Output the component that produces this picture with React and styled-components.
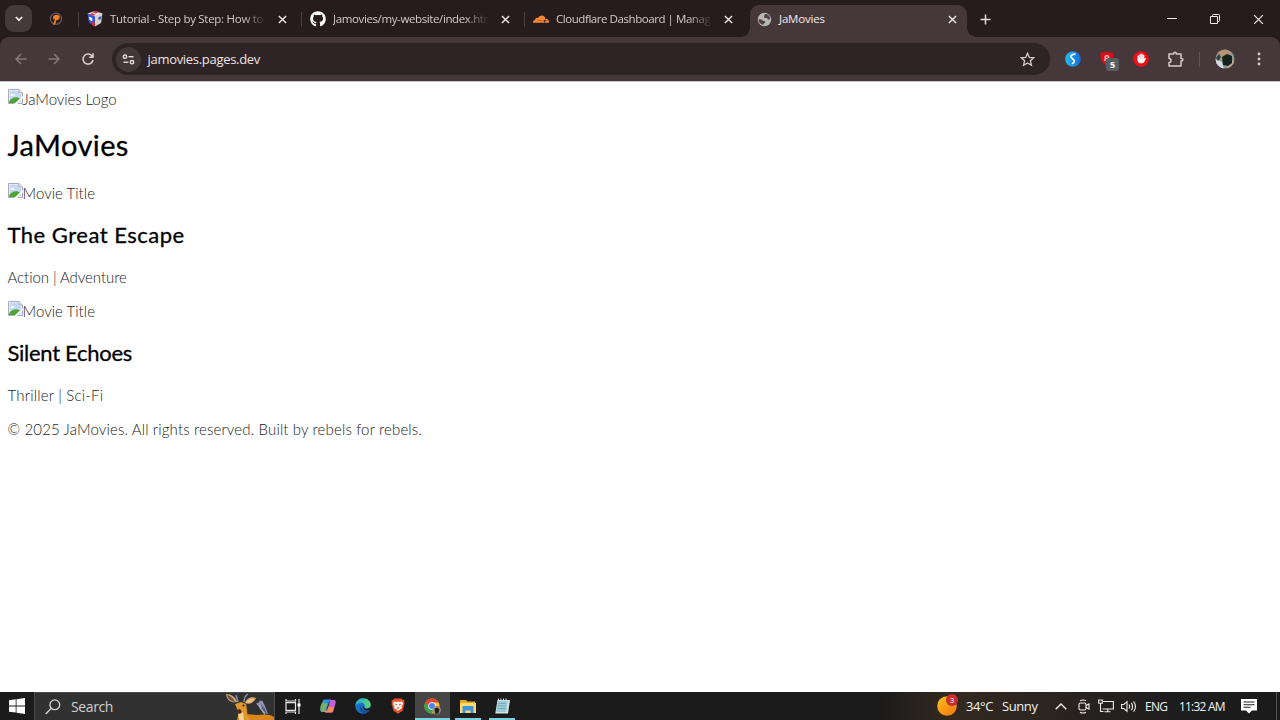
import React from 'react'
import styled, { createGlobalStyle, css } from 'styled-components';
import { FaGithub, FaCloudflare } from 'react-icons/fa';

const tabs = [
  { title: 'Tutorial - Step by Step: How to', icon: 'cube', spacing: -0.28 },
  { title: 'Jamovies/my-website/index.html', icon: 'github', spacing: -0.38 },
  { title: 'Cloudflare Dashboard | Manage', icon: 'cloudflare', spacing: -0.44 },
]

const movies = [
  { title: 'The Great Escape', genre: 'Action | Adventure', titleSpacing: 0.5, genreSpacing: -0.06 },
  { title: 'Silent Echoes', genre: 'Thriller | Sci-Fi', titleSpacing: -0.28, genreSpacing: 0.2 },
]

function Cross({ size = 9, width = 1.6 }) {
  return (
    <svg width={size} height={size} viewBox="0 0 10 10" fill="none" stroke="currentColor" strokeWidth={width}>
      <path d="M1 1l8 8M9 1l-8 8" />
    </svg>
  )
}

function CubeIcon() {
  return (
    <svg width="16" height="16" viewBox="0 0 16 16">
      <path d="M.5 2.5L8 5v10.5L2 12z" fill="#2b57d9" />
      <path d="M15.5 2.5L8 5v10.5L14 12z" fill="#d9d3c4" />
      <path d="M.5 2.500L8 0l7.500 2.500L8 5.500z" fill="#e4e6f2" />
      <path d="M5 1l4 1.500 3-1.500L8 0zM2 3l4-.8L8.500 4 6 4.800z" fill="#dd2f36" />
      <path d="M1.800 5.500l3.500 1.500v3.500L2.400 8.800z" fill="#f1f3fa" />
      <path d="M5 10.500l3 1.500v3.500l-3-1.700z" fill="#e12c33" />
      <path d="M14.500 5l-3 1.300v3l2.600-1.500z" fill="#2c4fc4" />
    </svg>
  )
}

function PinnedIcon() {
  return (
    <svg width="14" height="14" viewBox="0 0 14 14" fill="none">
      <circle cx="7" cy="6.800" r="5.600" stroke="#6b5d60" strokeWidth="1.200" />
      <path d="M4 4.800C5 2.600 9.800 2 10.600 4.500c.7 2.200-1.300 3.800-3 3.500L6.200 12.300 4 13l2-6.200-1.500 1z" fill="#f08022" />
    </svg>
  )
}

function GlobeIcon() {
  return (
    <svg width="15" height="15" viewBox="0 0 15 15">
      <circle cx="7.500" cy="7.500" r="6.700" fill="#b9b6b7" />
      <path d="M8 2.200c1.700-.7 4.500 1 5 3.300.3 1.500-.5 2.500-1.600 2.200-.8-.2-.6-1.500-1.700-1.700-1-.2-2.300.3-2.600-.8-.3-1 .2-2.400.9-3zM1.700 7.200c1.400-.2 3 .2 4 1.200.8.8 2.700.2 2.500 1.600-.2 1.300-1.500 1.200-1.800 2.800-2.600-.3-5-2.600-4.700-5.600z" fill="#504447" />
    </svg>
  )
}

function TabIcon({ name }) {
  if (name === 'cube') return <CubeIcon />
  if (name === 'github') return <FaGithub size={16} color="#fff" />
  return <FaCloudflare size={17} color="#f58634" />
}

function BrokenImage() {
  return (
    <svg width="15" height="15" viewBox="0 0 15 15">
      <path d="M.5.500h10.500l3.500 3.500v10.500H.500z" fill="#fff" stroke="#a9adb3" />
      <path d="M1.500 1.500H11V5h2.500v8.500h-12z" fill="#c5d9f6" />
      <path d="M3 5.800c.3-1.500 2.500-1.500 2.800-.3 1 0 1.200 1 .8 1.300H3c-.9 0-.9-.9 0-1z" fill="#fff" />
      <path d="M1 14v-1.500C3 9.500 6 7.500 10 8.500l2 1L8 14z" fill="#4fa534" />
      <path d="M15 7v2L9 15H6z" fill="#fff" />
      <path d="M11 .5V4h3.500" fill="#e7e9ec" stroke="#a9adb3" />
    </svg>
  )
}

function TitleBar() {
  return (
    <TabStrip>
      <TabSearch>
        <svg width="8" height="6" viewBox="0 0 8 6" fill="none" stroke="#f3eaec" strokeWidth="1.700"><path d="M.8 1L4 4.200 7.200 1" /></svg>
      </TabSearch>
      <PinnedTab><PinnedIcon /></PinnedTab>
      {tabs.map((tab) => (
        <Tab key={tab.icon}>
          <TabIcon name={tab.icon} />
          <TabTitle $spacing={tab.spacing}>{tab.title}</TabTitle>
          <CloseButton><Cross /></CloseButton>
        </Tab>
      ))}
      <ActiveTab>
        <GlobeIcon />
        <ActiveTitle>JaMovies</ActiveTitle>
        <CloseButton><Cross /></CloseButton>
      </ActiveTab>
      <NewTab>
        <svg width="11" height="11" viewBox="0 0 11 11" stroke="#e6dcde" strokeWidth="1.500"><path d="M5.500.500v10M.500 5.500h10" /></svg>
      </NewTab>
      <WindowButtons>
        <svg width="10" height="10" viewBox="0 0 10 10" stroke="#f1e9ea"><path d="M0 4.500h10" /></svg>
        <svg width="10" height="10" viewBox="0 0 10 10" fill="none" stroke="#f1e9ea"><path d="M.5 2.500h7v7h-7zM2.500 2.500v-1q0-1 1-1h5q1 0 1 1v5q0 1-1 1h-1" /></svg>
        <Cross size={11} width={1.1} />
      </WindowButtons>
    </TabStrip>
  )
}

function Toolbar() {
  return (
    <ToolbarRow>
      <NavButton $dim>
        <svg width="12" height="12" viewBox="0 0 12 12"><path d="M11.500 6H1M6 1L1 6l5 5" /></svg>
      </NavButton>
      <NavButton $dim>
        <svg width="12" height="12" viewBox="0 0 12 12"><path d="M.500 6H11M6 1l5 5-5 5" /></svg>
      </NavButton>
      <NavButton>
        <svg width="12" height="12" viewBox="0 0 12 12"><path d="M10.300 3.400A5 5 0 1 0 11 7M11 .300v3.900H7.200" /></svg>
      </NavButton>
      <AddressBar>
        <SiteInfo>
          <svg width="13" height="11" viewBox="0 0 13 11" fill="none" stroke="#e8dddf" strokeWidth="1.400">
            <circle cx="3" cy="2.700" r="1.700" /><path d="M6.500 2.700h5" />
            <circle cx="10" cy="8.200" r="1.700" /><path d="M1.500 8.200h5" />
          </svg>
        </SiteInfo>
        <Url>jamovies.pages.dev</Url>
        <svg width="15" height="15" viewBox="0 0 15 15" fill="none" stroke="#dccfd2" strokeWidth="1.300">
          <path d="M7.500 1.300l1.800 4.100 4.500.4-3.400 3 1 4.400-3.900-2.300-3.900 2.300 1-4.400-3.400-3 4.500-.4z" />
        </svg>
      </AddressBar>
      <Extension>
        <svg width="16" height="16" viewBox="0 0 16 16">
          <defs><linearGradient id="swirl" x2="1"><stop stopColor="#20bdf2" /><stop offset="1" stopColor="#1268d8" /></linearGradient></defs>
          <circle cx="8" cy="8" r="7.800" fill="url(#swirl)" />
          <path d="M10.500 2.800C6.500 3.300 4.500 5 7 7.200s4 3.200 0 5.700" fill="none" stroke="#fff" strokeWidth="1.700" />
        </svg>
      </Extension>
      <Extension>
        <svg width="16" height="16" viewBox="0 0 16 16">
          <path d="M1.500 2C4 1 6 1 8 .800c2 .2 4 .4 6.300 1.200.5 5.500-.3 10-6.300 13.200C3 12 .8 8 1.500 2z" fill="#d8101b" />
          <path d="M6 10l.3-4.500c.8-1.500 3.500-1 3.400.7-.2 1.200-1.300 1.500-2.700 1.400" fill="none" stroke="#f4c6c9" strokeWidth="1.400" />
        </svg>
        <Counter>5</Counter>
      </Extension>
      <Extension>
        <svg width="16" height="16" viewBox="0 0 16 16">
          <circle cx="8" cy="8" r="7.800" fill="#f20d16" />
          <path d="M5.300 9V5M7.100 8V3.500M8.900 8V3.300M10.600 8V4.500" stroke="#fff" strokeWidth="1.500" strokeLinecap="round" />
          <path d="M4.600 7.500h6.700l1-.7.7.5-1.900 4c-.7 1.300-4.400 1.700-5.500.3-1-1.200-1.200-2.500-1-4.100z" fill="#fff" />
        </svg>
      </Extension>
      <Extension>
        <svg width="17" height="17" viewBox="0 0 17 17" fill="none" stroke="#d6c8cb" strokeWidth="1.500" strokeLinejoin="round">
          <path d="M2 3h4.700V2.500a1.300 1.300 0 0 1 2.600 0V3H14v4.500h.6a1.300 1.300 0 0 1 0 2.600H14V15H2v-3.600a2 2 0 0 0 0-4z" />
        </svg>
      </Extension>
      <Divider />
      <Avatar>
        <svg width="20" height="20" viewBox="0 0 20 20">
          <defs><clipPath id="face"><circle cx="10" cy="10" r="9.500" /></clipPath></defs>
          <g clipPath="url(#face)">
            <path d="M0 0h20v20H0z" fill="#8e9a94" />
            <path d="M3 2l8-2 5 4-4 4-7 2z" fill="#b79272" />
            <path d="M0 10l7 3 2 7H0z" fill="#d4dbe0" />
            <path d="M14 12h6v8h-8z" fill="#c2a68c" />
            <path d="M7 8l5-3 5 2v7l-4 3-5-1z" fill="#14231f" />
            <path d="M4 5l2 3-3 4-2-3z" fill="#30413c" />
          </g>
        </svg>
      </Avatar>
      <MenuButton>
        <svg width="4" height="14" viewBox="0 0 4 14" fill="#d6c8cb"><circle cx="2" cy="2" r="1.400" /><circle cx="2" cy="7" r="1.400" /><circle cx="2" cy="12" r="1.400" /></svg>
      </MenuButton>
    </ToolbarRow>
  )
}

function Page() {
  return (
    <PageBody>
      <ImageRow $spacing={-0.07}><BrokenImage />JaMovies Logo</ImageRow>
      <SiteTitle>JaMovies</SiteTitle>
      {movies.map((movie) => (
        <Movie key={movie.title}>
          <ImageRow $spacing={0.03}><BrokenImage />Movie Title</ImageRow>
          <MovieTitle $spacing={movie.titleSpacing}>{movie.title}</MovieTitle>
          <Text $spacing={movie.genreSpacing}>{movie.genre}</Text>
        </Movie>
      ))}
      <Text $spacing={0.145}>© 2025 JaMovies. All rights reserved. Built by rebels for rebels.</Text>
    </PageBody>
  )
}

function Taskbar() {
  return (
    <TaskbarRow>
      <StartButton>
        <svg width="16" height="16" viewBox="0 0 16 16" fill="#fff"><path d="M0 2.300l6.700-1v6.200H0zM7.500 1.200L16 0v7.500H7.500zM0 8.400h6.700v6.200L0 13.700zM7.500 8.400H16V16l-8.500-1.200z" /></svg>
      </StartButton>
      <SearchBox>
        <svg width="16" height="16" viewBox="0 0 16 16" fill="none" stroke="#d8d8d8" strokeWidth="1.300"><circle cx="9.800" cy="5.800" r="4.900" /><path d="M6.300 9.300L.7 15" /></svg>
        <SearchText>Search</SearchText>
        <svg width="49" height="27" viewBox="0 0 49 27">
          <path d="M14 18c3-1 7-1 8 3l10 1c6-1 14-1 17 2v3H12z" fill="#d9861c" />
          <path d="M10 11l6-2 5 2 1 6c0 5 1 8 3 10H14c1-3 0-7-1-9z" fill="#e0982e" />
          <path d="M13 19c2 1 4 1 5 0l1 8h-5z" fill="#f5d491" />
          <path d="M1 1c5 0 10 3 11 8-4 1-10 0-11-8z" fill="#c9a578" />
          <path d="M2 2c4 1 7 4 8 7-4-1-7-3-8-7z" fill="#765039" />
          <path d="M31 5c-5-2-10 1-11 5 4 2 9 0 11-5z" fill="#dfa365" />
          <path d="M29 6c-3-1-6 1-8 4 3 0 6-1 8-4z" fill="#f0c39a" />
          <path d="M13 9L11 2M19 9c0-3 1-6 4-8" fill="none" stroke="#8391ac" strokeWidth="1.500" />
          <path d="M12 17l3-1 2 3-2 2-3-1z" fill="#4a2b18" />
          <circle cx="18.500" cy="12.500" r="1" fill="#2b170c" />
          <path d="M31 10.500l2.500-1 1.500-2 2.500.5 2.500 5 3 8-5-1-3.500-5.500z" fill="#8a91ae" />
          <path d="M36 12l3.500 3 2.500 6-4-3z" fill="#53608c" />
          <path d="M34.500 12l1 4 3 2.500 1 3" fill="none" stroke="#c9b5ab" />
        </svg>
      </SearchBox>
      <TaskCell $first>
        <svg width="16" height="15" viewBox="0 0 16 15" fill="none" stroke="#e6e6e6" strokeWidth="1.200"><path d="M1 3.700h9.500v7.600H1zM1 0v2h9.500V0M1 15v-2h9.500v2M14 0v15" /><path d="M12.500 4.500h3v3h-3z" fill="#fff" stroke="none" /></svg>
      </TaskCell>
      <TaskCell>
        <svg width="16" height="16" viewBox="0 0 16 16">
          <path d="M5 1.500h5.500c1.200 0 1.500 1 1.800 2H9L6.500 12c-.5 1.500-1.200 2-2.500 2H2C.3 14 0 12 .5 10.500l2-7C3 2 3.500 1.500 5 1.500z" fill="#2f8fe6" />
          <path d="M.4 8.500L2 4.500l5.500 1-1.800 6.200C5 13.600 4.200 14 3 14c-2 0-3-1.500-2.600-5.500z" fill="#6fb566" />
          <path d="M11 14.500H6c-1.200 0-1.500-1-1.800-2h3L9.600 4c.4-1.500 1.200-2 2.500-2H14c1.700 0 2 2 1.500 3.500l-2 7c-.5 1.500-1 2-2.500 2z" fill="#c45fd4" />
          <path d="M11 14.500H6c-1.200 0-1.500-1-1.800-2h3l1-3.500H14l-.8 3c-.4 2-.9 2.500-2.200 2.500z" fill="#f48a58" />
        </svg>
      </TaskCell>
      <TaskCell>
        <svg width="16" height="16" viewBox="0 0 16 16">
          <defs><linearGradient id="edge" x2="1" y2=".3"><stop stopColor="#25a4dd" /><stop offset="1" stopColor="#55d576" /></linearGradient></defs>
          <circle cx="8" cy="8" r="7.700" fill="#1671c8" />
          <path d="M.3 8C.5 3.500 4 .300 8 .300c4.500 0 7.700 3 7.700 6.300 0 2.600-2 4-4.200 4-2 0-2.500-.8-2-1.500C10.800 7 8.500 4.800 5.900 5 3 5.100 1 6.500.3 8z" fill="url(#edge)" />
          <path d="M6.300 7.300c-.8 3.200 2.200 5.800 7.800 4.900C11 16.800 4.500 14.500 4.500 10.500c0-1.500.8-2.600 1.800-3.200z" fill="#155099" />
          <path d="M9.400 9.200c-.3 1.700 3.300 2 5.500.4h.9c-.2 1.500-1 2.100-1.700 2.600-4.500.8-7-1.700-6-4.200z" fill="#1b1b1b" />
        </svg>
      </TaskCell>
      <TaskCell>
        <svg width="14" height="16" viewBox="0 0 14 16">
          <path d="M3.500.500h7L12 2l1.500.2-.3 2 .3 1.500-2 7L7 15.800l-4.500-3.100-2-7 .3-1.500-.3-2L2 2z" fill="#f3502a" />
          <path d="M3 3.500l2.500.4L7 3.500l1.500.4 2.500-.4 1 2-1.500 3.200.3 1.300L7 12.800 3.200 10l.3-1.300L2 5.500z" fill="#fff" />
          <path d="M3.500 5.500L6 6.300 5.500 8zM10.500 5.500L8 6.300 8.500 8zM5.500 10L7 9l1.500 1L7 11z" fill="#f3502a" />
        </svg>
      </TaskCell>
      <TaskCell $open $active>
        <svg width="17" height="17" viewBox="0 0 17 17">
          <circle cx="8" cy="8" r="7.600" fill="#f6c52a" />
          <path d="M1.400 4.300A7.600 7.600 0 0 1 14.700 4.400H8L4.700 10z" fill="#e24334" />
          <path d="M1.400 4.200A7.600 7.600 0 0 0 7.700 15.600L11 9.800 5 9.800z" fill="#34a353" />
          <circle cx="8" cy="8" r="3.800" fill="#fff" />
          <circle cx="8" cy="8" r="3" fill="#4285f4" />
          <circle cx="12.600" cy="12.300" r="4.200" fill="#a98d74" />
          <path d="M10.500 10.500l3-1 2 2-1 4-3 .5z" fill="#17231f" />
        </svg>
      </TaskCell>
      <TaskCell $open>
        <svg width="16" height="15" viewBox="0 0 16 15">
          <path d="M0 1h6l1.500 1.500H15v4H0z" fill="#e8a921" />
          <path d="M0 4h16v10H0z" fill="#fbd96c" />
          <path d="M2.500 14V8.500c0-1 .5-1.500 1.500-1.500h8c1 0 1.500.500 1.500 1.500V14h-3v-2.500h-5V14z" fill="#3f95dc" />
        </svg>
      </TaskCell>
      <TaskCell $open>
        <svg width="15" height="16" viewBox="0 0 15 16">
          <path d="M2.500 2H15l-2 13.500H.300z" fill="#d9e6e8" />
          <path d="M3 2.500h10L11.300 14H1z" fill="#9accd7" />
          <path d="M3.500 5.500h7.500M3 8h7.500M2.700 10.500h7.500" stroke="#75aab7" />
          <path d="M3.500.500v2.500M6 .500v2.500M8.500.500v2.500M11 .500v2.500" stroke="#e5e5e5" />
        </svg>
      </TaskCell>
      <Tray>
        <Weather>
          <svg width="20" height="20" viewBox="0 0 20 20">
            <defs><linearGradient id="sun" x2="1" y2="1"><stop stopColor="#ffc21a" /><stop offset="1" stopColor="#ef7210" /></linearGradient></defs>
            <circle cx="10" cy="10" r="9.800" fill="url(#sun)" />
          </svg>
          <Badge>3</Badge>
        </Weather>
        <TrayText $width={36} $size={13} $spacing={-0.4}>34°C</TrayText>
        <TrayText $width={53} $size={13} $spacing={-0.4}>Sunny</TrayText>
        <TrayIcon $width={23}>
          <svg width="12" height="7" viewBox="0 0 12 7" fill="none" stroke="#f0f0f0" strokeWidth="1.300"><path d="M.7 6.300L6 1l5.300 5.300" /></svg>
        </TrayIcon>
        <TrayIcon $width={20}>
          <svg width="12" height="15" viewBox="0 0 12 15" fill="none" stroke="#eee" strokeWidth="1.100"><rect x="1" y="4" width="7" height="7" rx="1.500" /><path d="M8 6.500l3-1.500v5L8 8.500M2 1.800Q5 .2 8 1.800M2 13.200q3 1.600 6 0" /></svg>
        </TrayIcon>
        <TrayIcon $width={22.500}>
          <svg width="16" height="14" viewBox="0 0 16 14" fill="none" stroke="#eee" strokeWidth="1.100"><path d="M5 2.500h10.400v7.500H4.500M9.800 10v2.500M6.500 12.800h6M2.500 6v6.500h3M.7 1h3.600v3.300H.700zM2.500 4v2" /></svg>
        </TrayIcon>
        <TrayIcon $width={24.500}>
          <svg width="16" height="13" viewBox="0 0 16 13" fill="none" stroke="#eee" strokeWidth="1.100"><path d="M.6 4.500h2.200L6 1.700v9.600L2.800 8.500H.6zM8 4.500q1.300 2 0 4M10.300 2.800q2.500 3.700 0 7.400M12.600 1.200q3.700 5.300 0 10.600" /></svg>
        </TrayIcon>
        <TrayText $width={34} $size={12} $spacing={-0.75}>ENG</TrayText>
        <TrayText $width={62} $size={12} $spacing={-0.8}>11:32 AM</TrayText>
        <svg width="16" height="16" viewBox="0 0 16 16"><path d="M0 1h16v11.500h-5L8 15.500 5 12.500H0z" fill="#fff" /><path d="M2.500 4h11M2.500 6.700h11M2.500 9.300h7" stroke="#222" strokeWidth="1.100" /></svg>
        <ShowDesktop />
      </Tray>
    </TaskbarRow>
  )
}

function App() {
  return (
    <Screen>
      <GlobalStyle />
      <BrowserTop>
        <TitleBar />
        <Toolbar />
      </BrowserTop>
      <Page />
      <Taskbar />
    </Screen>
  )
}

export default App


const GlobalStyle = createGlobalStyle`
    * { box-sizing: border-box; }
    body {
        margin: 0;
        overflow: hidden;
        background: #fff;
    }
    svg {
        display: block;
        flex-shrink: 0;
    }
`;

const Screen = styled.div`
    display: flex;
    flex-direction: column;
    width: 1280px;
    height: 720px;
    font-family: "Open Sans", "Noto Sans", sans-serif;
`;

const BrowserTop = styled.header`
    background: #261b1d;
`;

const TabStrip = styled.div`
    display: flex;
    height: 37px;
    padding: 0 16px 0 5px;
    color: #d6cacc;
`;

const TabSearch = styled.div`
    display: flex;
    align-items: center;
    justify-content: center;
    width: 27px;
    height: 27px;
    margin-top: 5px;
    border-radius: 9px;
    background: #46393b;
`;

const PinnedTab = styled.div`
    display: flex;
    align-items: center;
    justify-content: center;
    width: 45.5px;
    height: 38px;
    padding-left: 2px;
`;

const Tab = styled.div`
    display: flex;
    align-items: center;
    width: 223px;
    height: 38px;
    padding: 0 12px 0 9.5px;
    background: linear-gradient(#4b3e40, #4b3e40) 0 12px / 1px 15px no-repeat;

    > svg:first-child {
        width: 16px;
    }
`;

const titleText = css`
    font-size: 11.5px;
    line-height: 18px;
    white-space: nowrap;
`;

const TabTitle = styled.div`
    ${titleText}
    width: 155px;
    margin-left: 7px;
    overflow: hidden;
    letter-spacing: ${(props) => props.$spacing}px;
    mask-image: linear-gradient(90deg, #000 132px, transparent 157px);
`;

const CloseButton = styled.div`
    display: flex;
    justify-content: center;
    width: 12px;
    margin-left: auto;
    color: #eee5e6;
`;

const ActiveTab = styled.div`
    position: relative;
    display: flex;
    align-items: center;
    width: 217px;
    height: 33px;
    margin: 5px 0 0 3.5px;
    padding: 0 9px 5px 7px;
    border-radius: 9px 9px 0 0;
    background: #46383a;

    &::before,
    &::after {
        content: "";
        position: absolute;
        bottom: 1px;
        width: 9px;
        height: 9px;
    }
    &::before {
        left: -9px;
        background: radial-gradient(circle at 0 0, transparent 8.5px, #46383a 9px);
    }
    &::after {
        right: -9px;
        background: radial-gradient(circle at 100% 0, transparent 8.5px, #46383a 9px);
    }
`;

const ActiveTitle = styled.div`
    ${titleText}
    margin-left: 7px;
    letter-spacing: -0.18px;
    color: #f3ebec;
`;

const NewTab = styled.div`
    display: flex;
    align-items: center;
    justify-content: center;
    width: 37px;
    height: 38px;
`;

const WindowButtons = styled.div`
    display: flex;
    align-items: center;
    gap: 33px;
    height: 38px;
    margin-left: auto;
    color: #f1e9ea;
`;

const ToolbarRow = styled.div`
    display: flex;
    align-items: center;
    height: 44px;
    padding: 0 0 0 4px;
    border-radius: 9px 9px 0 0;
    background: #46383a;
`;

const NavButton = styled.div`
    display: flex;
    justify-content: center;
    width: 33.5px;

    svg {
        fill: none;
        stroke: ${(props) => (props.$dim ? '#85777a' : '#dccfd2')};
        stroke-width: 1.5;
    }
`;

const AddressBar = styled.div`
    display: flex;
    align-items: center;
    width: 937.5px;
    height: 32px;
    margin-left: 7.5px;
    padding: 0 15px 0 4px;
    border-radius: 16px;
    background: #2e2325;
`;

const SiteInfo = styled.div`
    display: flex;
    align-items: center;
    justify-content: center;
    width: 25px;
    height: 25px;
    border-radius: 50%;
    background: #43373a;
`;

const Url = styled.div`
    flex: 1;
    margin-left: 6.5px;
    font-size: 13px;
    line-height: 20px;
    letter-spacing: -0.3px;
    color: #eee4e6;
`;

const Extension = styled.div`
    position: relative;
    display: flex;
    justify-content: center;
    width: 34px;

    ${AddressBar} + & {
        margin-left: 6.5px;
    }
`;

const Counter = styled.div`
    position: absolute;
    left: 16px;
    top: 7px;
    width: 13px;
    height: 13px;
    border-radius: 3px;
    background: #5b5e60;
    color: #fff;
    font-size: 9px;
    font-weight: 700;
    line-height: 13px;
    text-align: center;
`;

const Divider = styled.div`
    width: 1px;
    height: 15px;
    margin-left: 7px;
    background: #62545a;
`;

const Avatar = styled.div`
    margin-left: 15px;
`;

const MenuButton = styled.div`
    margin-left: 22px;
`;

const PageBody = styled.main`
    flex: 1;
    padding: 7px 7.5px 0;
    border-top: 1px solid #cdc8c9;
    background: #fff;
    color: #222;
    font-family: "Ink Free", Lato, sans-serif;
`;

const pageText = css`
    height: 20px;
    font-size: 15px;
    font-weight: 300;
    line-height: 20px;
    white-space: nowrap;
    letter-spacing: ${(props) => props.$spacing}px;
`;

const ImageRow = styled.div`
    ${pageText}
    display: flex;
`;

const SiteTitle = styled.h1`
    margin: 16px 0 18px;
    color: #000;
    font-size: 29px;
    font-weight: 400;
    line-height: 40px;
    letter-spacing: 0.4px;
    -webkit-text-stroke: 0.3px #000;
`;

const Movie = styled.section`
    margin-bottom: 14px;
`;

const MovieTitle = styled.h2`
    margin: 18px 0;
    color: #000;
    font-size: 22px;
    font-weight: 400;
    line-height: 28px;
    letter-spacing: ${(props) => props.$spacing}px;
    -webkit-text-stroke: 0.3px #000;
`;

const Text = styled.p`
    ${pageText}
    margin: 0;
`;

const TaskbarRow = styled.footer`
    display: flex;
    height: 28px;
    background: linear-gradient(90deg, #1b1b1b 880px, #33291f 950px, #2c2520 1040px, #1e1d1d 1170px, #1b1b1b);
    color: #f2f2f2;
`;

const StartButton = styled.div`
    display: flex;
    align-items: center;
    justify-content: center;
    width: 34px;
`;

const SearchBox = styled.div`
    display: flex;
    align-items: center;
    width: 241px;
    padding-left: 10px;
    border: 1px solid #4c4c4c;
    border-bottom: 0;
    background: #313131;
`;

const SearchText = styled.div`
    flex: 1;
    margin-left: 10px;
    font-size: 14px;
    letter-spacing: -0.38px;
    color: #cfcfcf;
`;

const TaskCell = styled.div`
    display: flex;
    align-items: center;
    justify-content: center;
    width: ${(props) => (props.$first ? 35.5 : 34.9)}px;
    background: ${(props) => (props.$active ? '#464646' : 'transparent')};
    ${(props) => props.$open && css`
        background-image: linear-gradient(#7bd3e2, #7bd3e2);
        background-position: center bottom;
        background-size: ${props.$active ? '100%' : '26px'} 2px;
        background-repeat: no-repeat;
    `}
`;

const Tray = styled.div`
    display: flex;
    align-items: center;
    margin-left: auto;
`;

const Weather = styled.div`
    position: relative;
    margin-right: 9px;
`;

const Badge = styled.div`
    position: absolute;
    top: -2px;
    right: -1px;
    width: 12px;
    height: 12px;
    border-radius: 50%;
    background: #c62d2f;
    color: #fff;
    font-size: 8px;
    line-height: 12px;
    text-align: center;
`;

const TrayText = styled.div`
    width: ${(props) => props.$width}px;
    font-size: ${(props) => props.$size}px;
    letter-spacing: ${(props) => props.$spacing}px;
    white-space: nowrap;
`;

const TrayIcon = styled.div`
    width: ${(props) => props.$width}px;
`;

const ShowDesktop = styled.div`
    width: 4px;
    height: 28px;
    margin-left: 19px;
    border-left: 1px solid #565656;
`;
